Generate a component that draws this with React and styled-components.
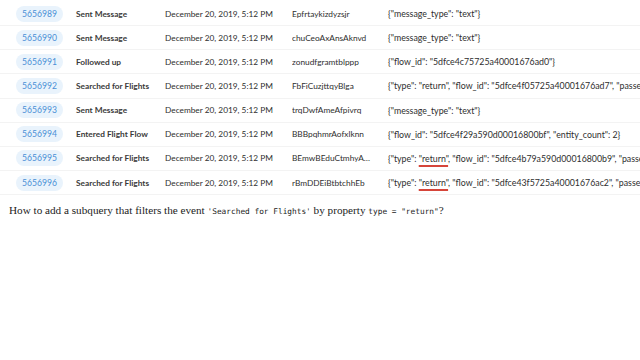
import React from "react";
import styled, { createGlobalStyle } from "styled-components";

const GlobalStyle = createGlobalStyle`
  body {
    margin: 0;
    background: #ffffff;
  }
`;

const Page = styled.div`
  width: 640px;
  height: 360px;
  overflow: hidden;
  background: #fff;
`;

const Table = styled.div`
  padding-top: 2px;
  font-family: Lato, "Open Sans", sans-serif;
  font-size: 8.3px;
  color: #333;
`;

const Row = styled.div`
  box-sizing: border-box;
  display: grid;
  grid-template-columns: 60px 89px 127px 96px 1fr;
  align-items: center;
  height: 24.15px;
  padding-left: 16px;
  border-bottom: 1px solid #f3f3f3;
  white-space: nowrap;
  overflow: hidden;
`;

const Badge = styled.span`
  justify-self: start;
  display: inline-flex;
  align-items: center;
  height: 16px;
  padding: 0 6px;
  border-radius: 8px;
  background: #e9f3fc;
  color: #4a8fd6;
  font-size: 8.6px;
`;

const Event = styled.span`
  font-weight: 700;
  color: #3a3a3a;
`;

const Cell = styled.span`
  color: #2e2e2e;
  overflow: hidden;
  text-overflow: ellipsis;
  max-width: ${(p) => p.$max || "none"};
`;

const Json = styled.span`
  color: #2e2e2e;
  font-size: 8.8px;
  min-width: 0;
`;

const Mark = styled.span`
  text-decoration: underline;
  text-decoration-color: #d6453a;
  text-decoration-thickness: 2px;
  text-underline-offset: 3px;
`;

const Question = styled.p`
  margin: 9px 0 0 9px;
  font-family: "Liberation Serif", "Times New Roman", serif;
  font-size: 11.2px;
  color: #222;
`;

const Code = styled.code`
  font-family: "DejaVu Sans Mono", monospace;
  font-size: 7.8px;
`;

const rows = [
  { id: "5656989", event: "Sent Message", user: "Epfrtaykizdyzsjr", json: '{"message_type": "text"}' },
  { id: "5656990", event: "Sent Message", user: "chuCeoAxAnsAknvd", json: '{"message_type": "text"}' },
  { id: "5656991", event: "Followed up", user: "zonudfgramtblppp", json: '{"flow_id": "5dfce4c75725a40001676ad0"}' },
  { id: "5656992", event: "Searched for Flights", user: "FbFiCuzjttqyBlga", json: '{"type": "return", "flow_id": "5dfce4f05725a40001676ad7", "passengers": 1}' },
  { id: "5656993", event: "Sent Message", user: "trqDwfAmeAfpivrq", json: '{"message_type": "text"}' },
  { id: "5656994", event: "Entered Flight Flow", user: "BBBpqhmrAofxlknn", json: '{"flow_id": "5dfce4f29a590d00016800bf", "entity_count": 2}' },
  { id: "5656995", event: "Searched for Flights", user: "BEmwBEduCtmhyAkqpz", json: null, flow: "5dfce4b79a590d00016800b9" },
  { id: "5656996", event: "Searched for Flights", user: "rBmDDEiBtbtchhEb", json: null, flow: "5dfce43f5725a40001676ac2" },
];

const App = () => {
  return (
    <Page>
      <GlobalStyle />
      <Table>
        {rows.map((r) => (
          <Row key={r.id}>
            <Badge>{r.id}</Badge>
            <Event>{r.event}</Event>
            <Cell>December 20, 2019, 5:12 PM</Cell>
            <Cell $max="80px">{r.user}</Cell>
            {r.json ? (
              <Json>{r.json}</Json>
            ) : (
              <Json>
                {'{"type": '}
                <Mark>"return"</Mark>
                {`, "flow_id": "${r.flow}", "passengers": 1}`}
              </Json>
            )}
          </Row>
        ))}
      </Table>
      <Question>
        How to add a subquery that filters the event{" "}
        <Code>'Searched for Flights'</Code> by property{" "}
        <Code>type = "return"</Code>?
      </Question>
    </Page>
  );
};

export default App;
